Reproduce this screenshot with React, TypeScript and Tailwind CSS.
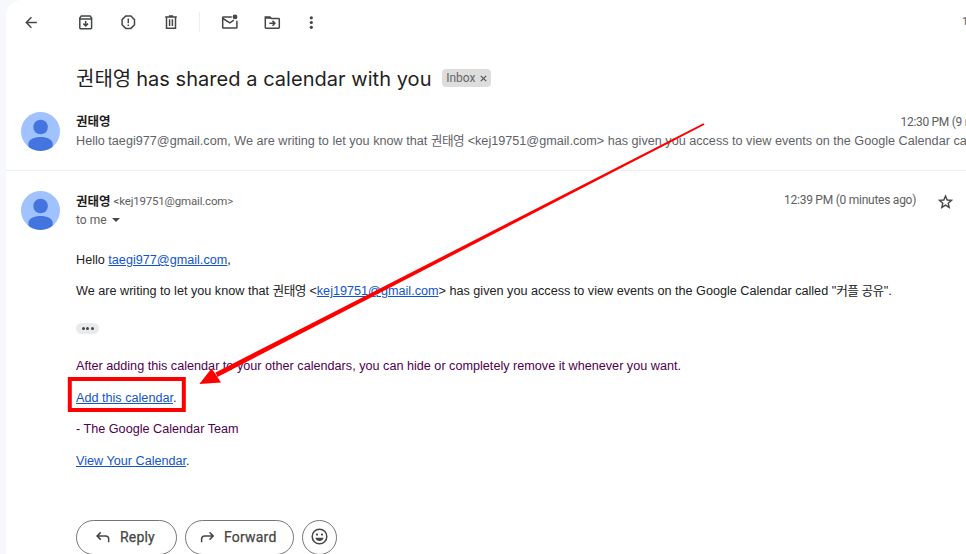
import type { ReactNode } from "react";

const gs = "font-['Roboto','Noto_Sans_CJK_KR',sans-serif]";
const kr = "font-['Noto_Sans_CJK_KR',sans-serif]";

function Icon({ className = "", children }: { className?: string; children: ReactNode }) {
  return (
    <svg
      className={`h-5 w-5 shrink-0 ${className}`}
      viewBox="0 0 20 20"
      fill="none"
      stroke="#444746"
      strokeWidth="1.5"
    >
      {children}
    </svg>
  );
}

function Toolbar() {
  return (
    <div className="flex h-[44px] items-center pl-[15px]">
      <Icon>
        <path d="M15.8 10.5H5.8M10.4 5.3 5.3 10.5l5.1 5.2" />
      </Icon>
      <Icon className="ml-[35px]">
        <path d="M3.8 6v10q0 .7.7.7h10.4q.7 0 .7-.7V6l-1.5-2.1H5.3zM3.8 7.1h11.8M9.7 9v4.6M7.4 11.6l2.3 2.3 2.3-2.3" />
      </Icon>
      <Icon className="ml-[22px]">
        <path d="M7.7 4h5.2l3.6 3.6v5.2l-3.6 3.6H7.7l-3.6-3.6V7.6zM10.3 6.6v4.6M10.3 12.4v1.6" />
      </Icon>
      <Icon className="ml-[23px]">
        <path d="M4.2 4.9h11.6M7.9 4h4.2M5.5 5v11.3h9V5M8.6 7.2v6.7M11.4 7.2v6.7" />
      </Icon>
      <div className="ml-[18px] h-5 w-px shrink-0 bg-[#eceef0]" />
      <Icon className="ml-5">
        <path d="M11.8 4.9H3.4q-.7 0-.7.7v9.8q0 .7.7.7h12.8q.7 0 .7-.7V8.7M3 6.5l6.8 4.3 4-2.6" />
        <circle cx="15" cy="4.9" r="2.4" fill="#444746" stroke="none" />
      </Icon>
      <Icon className="ml-[22px]">
        <path d="M3.3 15.4V4.9h4.6l1.5 1.7h7.2q.7 0 .7.7v8.2q0 .7-.7.7H4q-.7 0-.7-.7zM7.4 11.3h5.2M10.5 8.9l2.4 2.4-2.4 2.4" />
        <path d="M3 5h5l1.400 1.700H3z" fill="#444746" stroke="none" />
      </Icon>
      <Icon className="ml-[19px]">
        <g fill="#444746" stroke="none">
          <circle cx="10.3" cy="5.8" r="1.6" />
          <circle cx="10.3" cy="10.5" r="1.6" />
          <circle cx="10.3" cy="15.3" r="1.6" />
        </g>
      </Icon>
      <span className={`${gs} ml-[641px] text-[11px] text-[#5e5e5e]`}>1</span>
    </div>
  );
}

function Avatar() {
  return (
    <svg className="h-[39px] w-[39px] shrink-0" viewBox="0 0 39 39">
      <defs>
        <clipPath id="avatar-disc">
          <circle cx="19.5" cy="19.5" r="19.5" />
        </clipPath>
      </defs>
      <g clipPath="url(#avatar-disc)">
        <rect width="39" height="39" fill="#a0c2ff" />
        <circle cx="19.6" cy="15" r="7.3" fill="#4374e0" />
        <path d="M7.4 39v-7.2c0-4.2 6-6.8 12.2-6.8s12.1 2.6 12.1 6.8V39z" fill="#4374e0" />
      </g>
    </svg>
  );
}

function Link({ children }: { children: ReactNode }) {
  return <span className="text-[#1155cc] underline">{children}</span>;
}

function Ko({ children }: { children: ReactNode }) {
  return <span className="tracking-[-0.5px]">{children}</span>;
}

function Name() {
  return <span className={`${kr} text-[12.5px] leading-[18px] font-bold text-[#1f1f1f]`}>권태영</span>;
}

export default function App() {
  return (
    <div className="relative h-[554px] w-[966px] overflow-hidden bg-[#f6f8fc] pl-[6px] font-['Liberation_Sans','Noto_Sans_CJK_KR',sans-serif] text-[12.65px] leading-[18px] whitespace-nowrap text-[#222]">
      <div className="h-full overflow-hidden rounded-tl-2xl bg-white">
        <Toolbar />

        <div className="flex h-[68px] items-center pl-[70px]">
          <h1 className="flex items-baseline text-[20px] leading-[30px] text-[#1f1f1f]">
            <span className={kr}>권태영</span>
            <span className="ml-[5px] w-[296px] font-['Inter',sans-serif] tracking-[0.04px]">has shared a calendar with you</span>
          </h1>
          <span className={`${gs} ml-[10px] flex h-[18px] w-[49px] items-center rounded-[4px] bg-[#ddd] pl-[4px] text-[12px] text-[#666]`}>
            Inbox
            <svg className="ml-[4px] h-[7px] w-[7px]" viewBox="0 0 7 7" stroke="#555" strokeWidth="1.2">
              <path d="M.8.8l5.4 5.4M6.2.8.8 6.2" />
            </svg>
          </span>
        </div>

        <div className="flex h-[59px] border-b border-[#eceff1] pl-[15px]">
          <Avatar />
          <div className="ml-4 flex-1">
            <div className="flex h-[20px]">
              <Name />
              <span className={`${gs} ml-[790px] text-[12px] leading-[20px] tracking-[-0.3px] text-[#5e5e5e]`}>12:30 PM (9 m</span>
            </div>
            <div className="h-[18px] text-[#5f6368]">
              Hello taegi977@gmail.com, We are writing to let you know that <Ko>권태영</Ko> &lt;kej19751@gmail.com&gt; has given you access to view events on the Google Calendar ca
            </div>
          </div>
        </div>

        <div className="flex h-[69px] pt-5 pl-[15px]">
          <Avatar />
          <div className="ml-4 w-[708px]">
            <div className="flex h-[19px] items-center">
              <Name />
              <span className={`${gs} ml-[3px] text-[11.5px] tracking-[-0.18px] text-[#5e5e5e]`}>&lt;kej19751@gmail.com&gt;</span>
            </div>
            <div className={`${gs} mt-px flex items-center text-[12px] text-[#5e5e5e]`}>
              to me
              <svg className="ml-[5px] h-[4px] w-[8px]" viewBox="0 0 8 4" fill="#444746">
                <path d="M0 0h8L4 4z" />
              </svg>
            </div>
          </div>
          <span className={`${gs} w-[151px] text-[12px] leading-[19px] tracking-[-0.25px] text-[#5e5e5e]`}>12:39 PM (0 minutes ago)</span>
          <Icon className="mt-px">
            <path strokeWidth="1.4" d="m10.5 4 1.7 4 4.3.4-3.3 2.8 1 4.2-3.7-2.3-3.7 2.3 1-4.2-3.3-2.8L8.8 8z" />
          </Icon>
        </div>

        <div className="flex flex-col pt-[11px] pl-[70px]">
          <p>
            Hello <Link>taegi977@gmail.com</Link>,
          </p>
          <p className="mt-[13px]">
            We are writing to let you know that <Ko>권태영</Ko> &lt;<Link>kej19751@gmail.com</Link>&gt; has given you access to view events on the Google Calendar called "<Ko>커플 공유</Ko>".
          </p>
          <div className="mt-[23px] flex h-[11px] w-[23px] items-center justify-center gap-[1.5px] rounded-full bg-[#e8eaed]">
            <i className="h-[3px] w-[3px] rounded-full bg-[#444746]" />
            <i className="h-[3px] w-[3px] rounded-full bg-[#444746]" />
            <i className="h-[3px] w-[3px] rounded-full bg-[#444746]" />
          </div>
          <div className="mt-[23px] flex flex-col gap-[13.6px] text-[#500050]">
            <p>After adding this calendar to your other calendars, you can hide or completely remove it whenever you want.</p>
            <p>
              <Link>Add this calendar</Link>.
            </p>
            <p>- The Google Calendar Team</p>
            <p>
              <Link>View Your Calendar</Link>.
            </p>
          </div>
          <div className={`${gs} mt-[50px] flex gap-2 text-[14px] text-[#444746]`}>
            <div className="flex h-[35px] w-[101px] shrink-0 items-center rounded-full border border-[#747775] pl-[16px]">
              <Icon>
                <path d="M7.7 5.4 4.1 9l3.6 3.6M4.3 9h8.3q3.100 0 3.100 3.100v3.200" />
              </Icon>
              <span className="ml-[7px] tracking-[0.2px] [-webkit-text-stroke:0.25px_#444746]">Reply</span>
            </div>
            <div className="flex h-[35px] w-[109px] shrink-0 items-center rounded-full border border-[#747775] pl-[11px]">
              <Icon>
                <path d="M12.6 5.4 16.200 9l-3.600 3.600M16 9H7.700q-3.100 0-3.100 3.100v3.200" />
              </Icon>
              <span className="ml-[7px] tracking-[0.2px] [-webkit-text-stroke:0.25px_#444746]">Forward</span>
            </div>
            <div className="flex h-[35px] w-[35px] shrink-0 items-center justify-center rounded-full border border-[#747775]">
              <Icon>
                <circle cx="9.5" cy="9.5" r="7.3" />
                <circle cx="7" cy="7.6" r="1.1" fill="#444746" stroke="none" />
                <circle cx="12" cy="7.6" r="1.1" fill="#444746" stroke="none" />
                <path d="M5.3 10.8h8.4q-1.2 3.2-4.2 3.2t-4.2-3.200z" fill="#444746" stroke="none" />
              </Icon>
            </div>
          </div>
        </div>
      </div>

      <svg className="absolute inset-0 h-full w-full" viewBox="0 0 966 554">
        <path d="M703.5 123.2 704.5 124.8 217.5 377 215.5 372.5z" fill="#f00" />
        <path d="M199.300 384l12.200-15.500 4 5.500 5.500 8.500z" fill="#f00" />
        <rect x="69.8" y="379" width="114" height="31" fill="none" stroke="#f00" strokeWidth="4" />
      </svg>
    </div>
  );
}
